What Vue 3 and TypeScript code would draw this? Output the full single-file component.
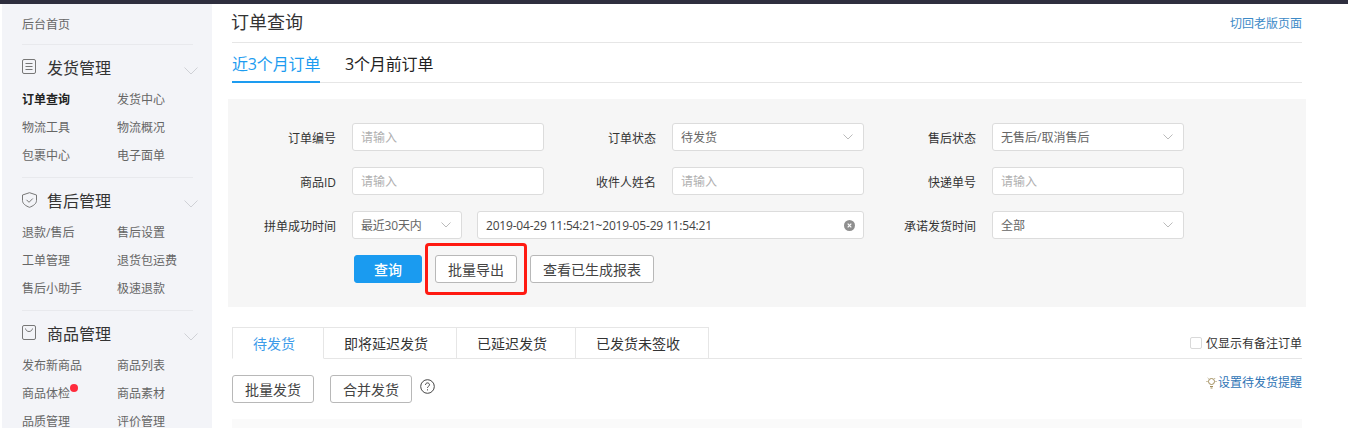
<script setup lang="ts">
interface NavSection { title: string; icon: string; items: { label: string; active?: boolean; dot?: boolean }[] }
const sections: NavSection[] = [
  { title: '发货管理', icon: 'doc', items: [{ label: '订单查询', active: true }, { label: '发货中心' }, { label: '物流工具' }, { label: '物流概况' }, { label: '包裹中心' }, { label: '电子面单' }] },
  { title: '售后管理', icon: 'shield', items: [{ label: '退款/售后' }, { label: '售后设置' }, { label: '工单管理' }, { label: '退货包运费' }, { label: '售后小助手' }, { label: '极速退款' }] },
  { title: '商品管理', icon: 'bag', items: [{ label: '发布新商品' }, { label: '商品列表' }, { label: '商品体检', dot: true }, { label: '商品素材' }, { label: '品质管理' }, { label: '评价管理' }] },
]
const subTabs = ['待发货', '即将延迟发货', '已延迟发货', '已发货未签收']
</script>

<template>
  <div class="page">
    <div class="topbar"></div>
    <div class="body">
      <aside class="side">
        <div class="home">后台首页</div>
        <section v-for="s in sections" :key="s.title" class="sec">
          <div class="sec-head">
            <svg class="sec-icon" width="16" height="16" viewBox="0 0 16 16" fill="none" stroke="#777" stroke-width="1">
              <template v-if="s.icon === 'doc'">
                <rect x="0.5" y="0.5" width="13" height="14" rx="1.500" />
                <path d="M3.500 4.500h7M3.500 7.500h7M3.500 10.500h7" />
              </template>
              <template v-else-if="s.icon === 'shield'">
                <path d="M7.500 .7 14.500 3v5.500c0 3.400-3.500 5.500-7 6.800-3.500-1.300-7-3.400-7-6.800V3z" />
                <path d="M4.500 7.800 7 10.300l3.800-3.800" />
              </template>
              <template v-else>
                <rect x="0.500" y="0.500" width="13" height="14" rx="1.500" />
                <path d="M3.500 3.500c.4 2 1.800 3 3.500 3s3.100-1 3.500-3" />
              </template>
            </svg>
            <span class="sec-title">{{ s.title }}</span>
            <svg class="sec-arrow" width="14" height="8" viewBox="0 0 14 8" fill="none" stroke="#cfd1d6"><path d="M.5.5 7 7l6.500-6.500" /></svg>
          </div>
          <div class="sec-items">
            <a v-for="i in s.items" :key="i.label" class="item" :class="{ active: i.active }">{{ i.label }}<i v-if="i.dot" class="dot"></i></a>
          </div>
        </section>
      </aside>

      <main class="main">
        <header class="title-row">
          <h1>订单查询</h1>
          <a class="link">切回老版页面</a>
        </header>
        <nav class="tabs">
          <span class="tab on">近3个月订单</span>
          <span class="tab">3个月前订单</span>
        </nav>

        <div class="filter">
          <div class="grid">
            <div class="field"><label>订单编号</label><div class="ctl ph">请输入</div></div>
            <div class="field"><label>订单状态</label><div class="ctl sel">待发货<svg class="chev" width="10" height="6" viewBox="0 0 10 6" fill="none" stroke="#bbb"><path d="M.5.5 5 5 9.500.5" /></svg></div></div>
            <div class="field"><label>售后状态</label><div class="ctl sel">无售后/取消售后<svg class="chev" width="10" height="6" viewBox="0 0 10 6" fill="none" stroke="#bbb"><path d="M.5.5 5 5 9.500.5" /></svg></div></div>
            <div class="field"><label>商品ID</label><div class="ctl ph">请输入</div></div>
            <div class="field"><label>收件人姓名</label><div class="ctl ph">请输入</div></div>
            <div class="field"><label>快递单号</label><div class="ctl ph">请输入</div></div>
            <div class="field wide">
              <label>拼单成功时间</label>
              <div class="ctl sel short">最近30天内<svg class="chev" width="10" height="6" viewBox="0 0 10 6" fill="none" stroke="#bbb"><path d="M.5.5 5 5 9.500.5" /></svg></div>
              <div class="ctl date">2019-04-29 11:54:21~2019-05-29 11:54:21
                <svg class="clear" width="11" height="11" viewBox="0 0 11 11"><circle cx="5.500" cy="5.500" r="5.500" fill="#8f8f8f" /><path d="M3.700 3.700l3.600 3.600M7.300 3.700 3.700 7.300" stroke="#fff" stroke-width="1.200" /></svg>
              </div>
            </div>
            <div class="field"><label>承诺发货时间</label><div class="ctl sel">全部<svg class="chev" width="10" height="6" viewBox="0 0 10 6" fill="none" stroke="#bbb"><path d="M.5.5 5 5 9.500.5" /></svg></div></div>
          </div>
          <div class="actions">
            <button class="btn primary">查询</button>
            <div class="hl"><button class="btn w82">批量导出</button><span class="redbox"></span></div>
            <button class="btn w124">查看已生成报表</button>
          </div>
        </div>

        <div class="subtabs">
          <span v-for="(t, n) in subTabs" :key="t" class="st" :class="['st' + n, { on: n === 0 }]">{{ t }}</span>
          <label class="only"><span class="box"></span>仅显示有备注订单</label>
        </div>

        <div class="ops">
          <button class="btn w82">批量发货</button>
          <button class="btn w82">合并发货</button>
          <svg class="help" width="15" height="15" viewBox="0 0 15 15" fill="none" stroke="#444">
            <circle cx="7.500" cy="7.500" r="6.800" />
            <path d="M5.500 6c0-1.300.9-2.100 2-2.100s2 .8 2 1.900c0 1.500-2 1.500-2 3" />
            <path d="M7.500 10.300v1.100" />
          </svg>
          <a class="remind">
            <svg width="11" height="12" viewBox="0 0 11 12" fill="none" stroke="#a08c5a"><circle cx="5.500" cy="4.500" r="3" /><path d="M4 9.500h3M4.500 11h2M.5 4.500h1M9.500 4.500h1M1.800 1l.7.700M9.200 1l-.7.700" /></svg>设置待发货提醒
          </a>
        </div>
        <div class="table-head"></div>
      </main>
    </div>
  </div>
</template>

<style>
html, body { margin: 0; background: #fff; overflow: hidden; }
</style>

<style scoped>
.page {
  width: 1348px; height: 428px; overflow: hidden; background: #fff; color: #333;
  font-family: "Open Sans", "Noto Sans CJK SC", sans-serif; font-size: 12px;
}
.topbar { height: 4px; background: #2e2e3e; }
.body { display: flex; height: 424px; }

.side { width: 210px; margin-left: 2px; padding: 0 18px 0 20px; box-sizing: border-box; background: #f3f4f8; flex: none; overflow: hidden; }
.home { height: 40px; line-height: 41px; color: #666; border-bottom: 1px solid #e8e9ed; margin-right: 1px; }
.sec { border-bottom: 1px solid #e8e9ed; height: 132px; margin-right: 1px; }
.sec-head { display: flex; align-items: center; height: 44px; position: relative; }
.sec-icon { flex: none; margin-right: 9px; }
.sec-title { font-size: 16px; color: #333; }
.sec-arrow { position: absolute; left: 162px; top: 22px; }
.sec-items { display: grid; grid-template-columns: 95px 95px; grid-auto-rows: 28px; align-items: center; margin-top: -4px; }
.item { color: #666; white-space: nowrap; position: relative; }
.item.active { color: #222; font-weight: 700; }
.dot { position: absolute; left: 48px; top: 0; width: 8px; height: 8px; border-radius: 50%; background: #ff2b3d; }

.main { margin-left: 20px; width: 1070px; flex: none; }
.title-row { height: 38px; border-bottom: 1px solid #e6e6e6; display: flex; justify-content: space-between; align-items: center; }
h1 { margin: -2px 0 0 -1px; font-size: 18px; font-weight: 400; color: #333; line-height: 36px; }
.link { color: #3d8ac7; }
.tabs { display: flex; height: 39px; border-bottom: 1px solid #e6e6e6; gap: 25px; }
.tab { font-size: 16px; color: #222; height: 39px; line-height: 43px; box-sizing: border-box; white-space: nowrap; letter-spacing: -.15px; }
.tab.on { color: #1d9cf0; border-bottom: 2px solid #1d9cf0; width: 88px; height: 40px; }

.filter { margin: 16px -4px 0; height: 208px; background: #f6f6f6; box-sizing: border-box; padding-top: 24px; }
.grid { display: grid; grid-template-columns: repeat(3, 320px); grid-auto-rows: 28px; row-gap: 16px; }
.field { display: flex; align-items: center; }
.wide { grid-column: span 2; }
.field label { width: 108px; text-align: right; margin-right: 16px; color: #333; flex: none; white-space: nowrap; padding-top: 2px; }
.ctl { width: 192px; height: 28px; box-sizing: border-box; background: #fff; border: 1px solid #dcdcdc; border-radius: 3px; padding: 0 8px; line-height: 28px; position: relative; color: #666; flex: none; }
.ph { color: #b0b0b0; }
.chev { position: absolute; right: 10px; top: 10px; }
.short { width: 110px; letter-spacing: -.2px; }
.date { width: 387px; margin-left: 15px; color: #444; letter-spacing: -.19px; }
.clear { position: absolute; right: 8px; top: 8px; }
.actions { display: flex; align-items: center; margin: 16px 0 0 126px; }
.btn { height: 28px; box-sizing: border-box; padding: 0; background: #fff; border: 1px solid #b8b8b8; border-radius: 3px; font: inherit; font-size: 14px; color: #444; }
.primary { width: 68px; background: #1a9bf0; border-color: #1a9bf0; color: #fff; font-weight: 500; }
.w82 { width: 82px; }
.w124 { width: 124px; }
.hl { position: relative; margin: 0 13px; display: flex; }
.redbox { position: absolute; left: -10px; top: -12px; width: 102px; height: 52px; box-sizing: border-box; border: 3px solid #ff1a12; border-radius: 4px; }

.subtabs { display: flex; margin-top: 20px; height: 32px; border-bottom: 1px solid #e6e6e6; box-sizing: border-box; position: relative; font-size: 14px; }
.st { height: 32px; line-height: 31px; padding-left: 20px; box-sizing: border-box; border: 1px solid #e6e6e6; border-left: 0; background: #fff; color: #333; white-space: nowrap; }
.st0 { width: 92px; border-left: 1px solid #e6e6e6; border-bottom-color: #fff; color: #3d9be9; }
.st1 { width: 133px; }
.st2 { width: 119px; }
.st3 { width: 133px; }
.only { margin-left: auto; display: flex; align-items: center; font-size: 12px; color: #333; height: 31px; padding-top: 1px; box-sizing: border-box; }
.box { width: 12px; height: 12px; box-sizing: border-box; border: 1px solid #d9d9d9; border-radius: 2px; margin-right: 4px; }

.ops { display: flex; align-items: flex-start; margin-top: 16px; height: 28px; gap: 16px; }
.help { margin-top: 4px; margin-left: -8px; }
.remind { margin-left: auto; margin-top: 1px; color: #2e74b5; display: flex; align-items: center; height: 14px; line-height: 14px; }
.remind svg { margin-right: 1px; }
.table-head { margin-top: 16px; height: 20px; background: #fafafa; }
</style>
